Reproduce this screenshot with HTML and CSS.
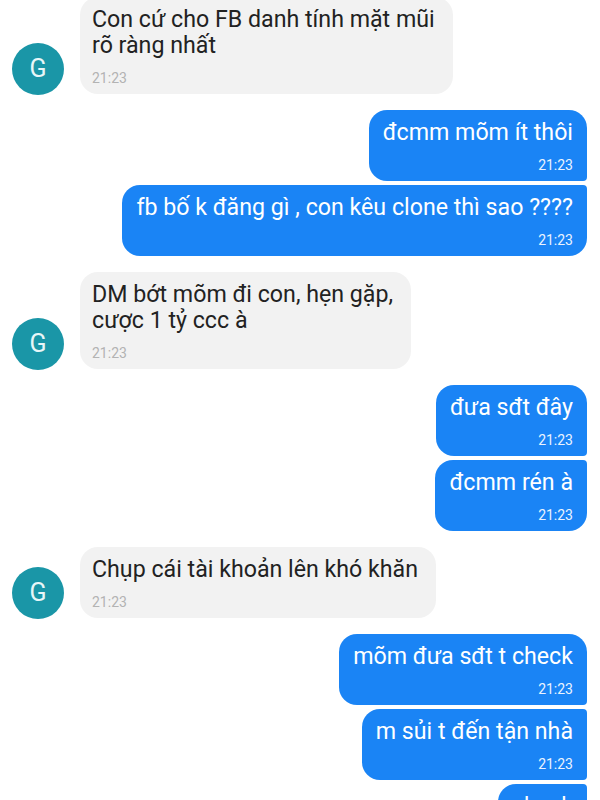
FILE: index.html
```html
<!DOCTYPE html>
<html lang="vi">
<head>
<meta charset="utf-8">
<title>Chat</title>
<link rel="stylesheet" href="styles.css">
</head>
<body>
<div class="chat">
  <div class="row in">
    <div class="avatar">G</div>
    <div class="bubble"><div class="text">Con cứ cho FB danh tính mặt mũi<br>rõ ràng nhất</div><div class="time">21:23</div></div>
  </div>
  <div class="group out">
    <div class="bubble first"><div class="text">đcmm mõm ít thôi</div><div class="time">21:23</div></div>
    <div class="bubble last"><div class="text">fb bố k đăng gì , con kêu clone thì sao ????</div><div class="time">21:23</div></div>
  </div>
  <div class="row in">
    <div class="avatar">G</div>
    <div class="bubble"><div class="text">DM bớt mõm đi con, hẹn gặp,<br>cược 1 tỷ ccc à</div><div class="time">21:23</div></div>
  </div>
  <div class="group out">
    <div class="bubble first"><div class="text">đưa sđt đây</div><div class="time">21:23</div></div>
    <div class="bubble last"><div class="text">đcmm rén à</div><div class="time">21:23</div></div>
  </div>
  <div class="row in">
    <div class="avatar">G</div>
    <div class="bubble"><div class="text">Chụp cái tài khoản lên khó khăn</div><div class="time">21:23</div></div>
  </div>
  <div class="group out">
    <div class="bubble first"><div class="text">mõm đưa sđt t check</div><div class="time">21:23</div></div>
    <div class="bubble mid"><div class="text">m sủi t đến tận nhà</div><div class="time">21:23</div></div>
    <div class="bubble last"><div class="text">check</div><div class="time">21:23</div></div>
  </div>
</div>
</body>
</html>
```
FILE: styles.css
```css
html, body {
  margin: 0;
  padding: 0;
  background: #ffffff;
}
body {
  font-family: Roboto, "Noto Sans", Arial, sans-serif;
  width: 600px;
  height: 800px;
  overflow: hidden;
}
.chat {
  display: flex;
  flex-direction: column;
  gap: 16px;
  margin-top: -3px;
  padding: 0 13px 0 12px;
}
.row.in {
  display: flex;
  align-items: flex-end;
  gap: 16px;
}
.avatar {
  width: 52px;
  height: 52px;
  border-radius: 50%;
  background: #1a96a7;
  color: #e8f6f8;
  font-size: 25px;
  line-height: 52px;
  text-align: center;
  flex: none;
  margin-bottom: -1px;
}
.bubble {
  padding: 9px 18px 6px 12px;
  border-radius: 18px;
  white-space: nowrap;
}
.text {
  font-size: 23.2px;
  line-height: 26px;
}
.time {
  font-size: 14px;
  line-height: 20px;
  margin-top: 10px;
}
.in .bubble {
  background: #f2f2f2;
  color: #222222;
}
.in .time {
  color: #b3b3b3;
}
.group.out {
  display: flex;
  flex-direction: column;
  align-items: flex-end;
  gap: 4px;
}
.out .bubble {
  background: #1a84f5;
  color: #ffffff;
  padding: 9px 14px 6px 14px;
  text-align: right;
}
.out .time {
  color: #eaf3ff;
}
.out .bubble.first {
  border-bottom-right-radius: 4px;
}
.out .bubble.mid {
  border-top-right-radius: 4px;
  border-bottom-right-radius: 4px;
}
.out .bubble.last {
  border-top-right-radius: 4px;
}
```
